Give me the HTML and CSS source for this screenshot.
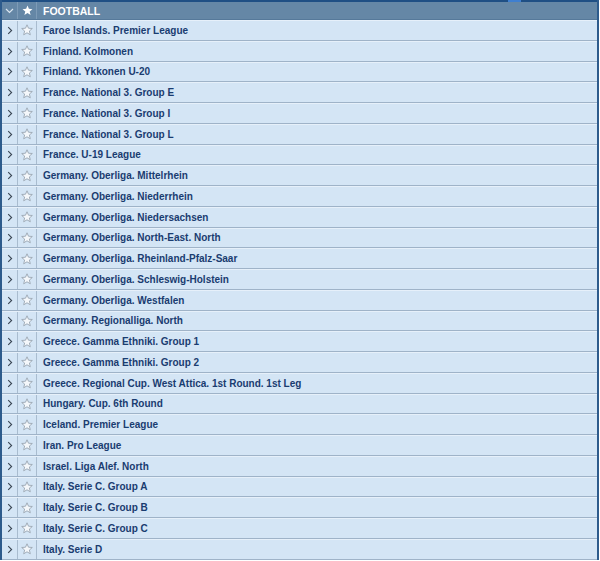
FILE: index.html
```html
<!DOCTYPE html>
<html lang="en">

<head>
    <meta charset="UTF-8">
    <title>Football</title>
    <link rel="stylesheet" href="styles.css">
</head>

<body>
    <div class="topmark"></div>
    <div class="list">
        <!-- header -->
        <div class="row head">
            <span class="arrow">
                <svg width="9" height="6" viewBox="0 0 9 6"><path d="M1 1 L4.5 4.5 L8 1" fill="none" stroke="#dbe6f0" stroke-width="1.2"/></svg>
            </span>
            <span class="fav">
                <svg width="11" height="11" viewBox="0 0 12 12"><path d="M6 0.6 L7.5 4.2 L11.4 4.5 L8.4 7 L9.4 10.9 L6 8.8 L2.6 10.9 L3.6 7 L0.6 4.5 L4.5 4.2 Z" fill="#fff"/></svg>
            </span>
            <span class="name">FOOTBALL</span>
        </div>
    </div>

    <script>
        var leagues = [
            "Faroe Islands. Premier League",
            "Finland. Kolmonen",
            "Finland. Ykkonen U-20",
            "France. National 3. Group E",
            "France. National 3. Group I",
            "France. National 3. Group L",
            "France. U-19 League",
            "Germany. Oberliga. Mittelrhein",
            "Germany. Oberliga. Niederrhein",
            "Germany. Oberliga. Niedersachsen",
            "Germany. Oberliga. North-East. North",
            "Germany. Oberliga. Rheinland-Pfalz-Saar",
            "Germany. Oberliga. Schleswig-Holstein",
            "Germany. Oberliga. Westfalen",
            "Germany. Regionalliga. North",
            "Greece. Gamma Ethniki. Group 1",
            "Greece. Gamma Ethniki. Group 2",
            "Greece. Regional Cup. West Attica. 1st Round. 1st Leg",
            "Hungary. Cup. 6th Round",
            "Iceland. Premier League",
            "Iran. Pro League",
            "Israel. Liga Alef. North",
            "Italy. Serie C. Group A",
            "Italy. Serie C. Group B",
            "Italy. Serie C. Group C",
            "Italy. Serie D"
        ];
        var list = document.querySelector(".list");
        var arrow = '<svg width="6" height="9" viewBox="0 0 6 9"><path d="M1.2 1.2 L4.6 4.5 L1.2 7.8" fill="none" stroke="#3a4654" stroke-width="1.1"/></svg>';
        var star = '<svg width="12" height="12" viewBox="0 0 12 12"><path d="M6 0.8 L7.5 4.2 L11.3 4.5 L8.4 7 L9.3 10.8 L6 8.8 L2.7 10.8 L3.6 7 L0.7 4.5 L4.5 4.2 Z" fill="#f4f7fa" stroke="#9aa6b2" stroke-width="0.9" stroke-linejoin="round"/></svg>';
        for (var i = 0; i < leagues.length; i++) {
            var row = document.createElement("div");
            row.className = "row";
            row.innerHTML = '<span class="arrow">' + arrow + '</span><span class="fav">' + star + '</span><span class="name">' + leagues[i] + '</span>';
            list.appendChild(row);
        }
    </script>
</body>

</html>
```

FILE: styles.css
```css
/* page */

body {
    margin: 0;
    background: #fff;
    font-family: "Liberation Sans", Arial, sans-serif;
    position: relative;
}

/* small blue tab cut off at top */

.topmark {
    position: absolute;
    top: 0;
    left: 508px;
    width: 13px;
    height: 2px;
    background: #3f7fd0;
}

/* the whole list */

.list {
    width: 595px;
    border-left: 2px solid #2d5b8c;
    border-right: 2px solid #2d5b8c;
    box-shadow: inset -1px 0 0 #eef4fa;
}

/* one row: arrow, star, name */

.row {
    display: grid;
    grid-template-columns: 16px 19px 1fr;
    height: 20.76px;
    background: #d4e5f5;
    border-top: 1px solid #e6f0fa;
    border-bottom: 1px solid #9fb3c8;
    box-sizing: border-box;
}

.row span {
    display: flex;
    align-items: center;
}

.arrow {
    justify-content: center;
    border-right: 1px solid #a9bccf;
}

.fav {
    justify-content: center;
    border-right: 1px solid #a9bccf;
}

.name {
    padding-left: 6px;
    font-size: 10px;
    font-weight: bold;
    color: #1a3c70;
    white-space: nowrap;
}

/* header row */

.row.head {
    height: 20px;
    background: #6587a6;
    border-top: 2px solid #1f4f84;
    border-bottom: 1px solid #56799a;
}

.head .arrow,
.head .fav {
    border-right: 1px solid #7d9bb7;
}

.head .name {
    color: #fff;
    font-size: 10.5px;
}
```
